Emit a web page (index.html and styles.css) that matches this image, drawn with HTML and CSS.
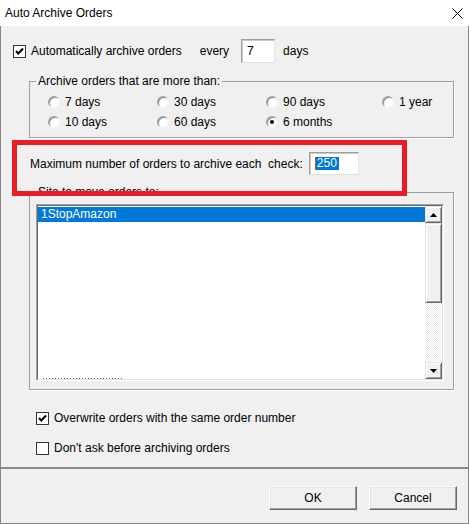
FILE: index.html
```html
<!DOCTYPE html>
<html>
<head>
<meta charset="utf-8">
<link rel="stylesheet" href="styles.css">
</head>
<body>
<div class="window">
  <div class="titlebar">
    <span class="title">Auto Archive Orders</span>
    <svg class="close" width="11" height="11" viewBox="0 0 11 11"><path d="M0.5 0.5 L10.5 10.5 M10.5 0.5 L0.5 10.5" stroke="#000" stroke-width="1" fill="none"/></svg>
  </div>
  <div class="client">
    <div class="row-auto">
      <label class="check">
        <span class="box"><svg width="11" height="11" viewBox="0 0 11 11"><path d="M2 5 L4.3 7.5 L9 2.5" stroke="#000" stroke-width="2" fill="none"/></svg></span>
        <span>Automatically archive orders</span>
      </label>
      <span class="every">every</span>
      <span class="textbox tb-days">7</span>
      <span class="days">days</span>
    </div>

    <fieldset class="group g1">
      <legend>Archive orders that are more than:</legend>
      <div class="radios">
        <label class="radio"><span class="dot"></span>7 days</label>
        <label class="radio"><span class="dot"></span>30 days</label>
        <label class="radio"><span class="dot"></span>90 days</label>
        <label class="radio"><span class="dot"></span>1 year</label>
        <label class="radio"><span class="dot"></span>10 days</label>
        <label class="radio"><span class="dot"></span>60 days</label>
        <label class="radio"><span class="dot on"></span>6 months</label>
      </div>
    </fieldset>

    <div class="row-max">
      <span class="max-label">Maximum number of orders to archive each&nbsp; check:</span>
      <span class="textbox tb-max"><span class="caret"></span><span class="sel">250</span></span>
    </div>

    <fieldset class="group g2">
      <legend>Site to move orders to:</legend>
      <div class="listbox">
        <div class="listbox-inner">
          <div class="items">
            <div class="item selected">1StopAmazon</div>
            <div class="spacer"></div>
            <div class="ghost"></div>
          </div>
          <div class="scrollbar">
            <div class="sb-btn"><svg width="7" height="4" viewBox="0 0 7 4"><path d="M3.5 0 L7 4 L0 4 Z" fill="#000"/></svg></div>
            <div class="sb-thumb"></div>
            <div class="sb-track"></div>
            <div class="sb-btn"><svg width="7" height="4" viewBox="0 0 7 4"><path d="M0 0 L7 0 L3.5 4 Z" fill="#000"/></svg></div>
          </div>
        </div>
      </div>
    </fieldset>

    <label class="check c2">
      <span class="box"><svg width="11" height="11" viewBox="0 0 11 11"><path d="M2 5 L4.3 7.5 L9 2.5" stroke="#000" stroke-width="2" fill="none"/></svg></span>
      <span>Overwrite orders with the same order number</span>
    </label>
    <label class="check c3">
      <span class="box"></span>
      <span>Don't ask before archiving orders</span>
    </label>
  </div>
  <div class="footer">
    <button class="btn">OK</button>
    <button class="btn">Cancel</button>
  </div>
  <div class="highlight"></div>
</div>
</body>
</html>
```
FILE: styles.css
```css
* { box-sizing: border-box; }
html, body { margin: 0; padding: 0; }
body {
  width: 469px;
  height: 524px;
  overflow: hidden;
  background: #fff;
  font-family: "Liberation Sans", Arial, sans-serif;
  font-size: 12px;
  color: #000;
}
.window {
  position: relative;
  width: 469px;
  height: 524px;
  display: flex;
  flex-direction: column;
}
.titlebar {
  height: 26px;
  flex: none;
  display: flex;
  align-items: center;
  justify-content: space-between;
  padding: 0 6px 0 5px;
  background: #fff;
}
.title { line-height: 14px; }
.close { display: block; }

.client {
  height: 441px;
  flex: none;
  background: #f0f0f0;
  border-left: 1px solid #858585;
  border-right: 1px solid #858585;
  display: flex;
  flex-direction: column;
  align-items: flex-start;
}

.row-auto {
  display: flex;
  align-items: center;
  height: 24px;
  margin: 13px 0 0 12px;
}
.check {
  display: flex;
  align-items: center;
  gap: 5px;
  line-height: 16px;
}
.box {
  width: 13px;
  height: 13px;
  flex: none;
  background: #fff;
  border: 1px solid #333;
  display: flex;
  align-items: center;
  justify-content: center;
}
.box svg { display: block; }
.every { margin-left: 18px; }
.days { margin-left: 8px; }

.textbox {
  display: flex;
  align-items: center;
  background: #fff;
  border: 1px solid;
  border-color: #a0a0a0 #e3e3e3 #e3e3e3 #a0a0a0;
  box-shadow: inset 1px 1px 0 #c8c8c8;
}
.tb-days {
  width: 34px;
  height: 24px;
  margin-left: 12px;
  padding-left: 5px;
}

.group {
  margin: 0 0 0 28px;
  width: 425px;
  padding: 0;
  border: 1px solid #a0a0a0;
  box-shadow: 1px 1px 0 #fff;
  min-width: 0;
}
.group legend {
  padding: 0 2px;
  margin: 0;
  line-height: 15px;
}
.g1 {
  margin-top: 11px;
  padding: 3px 0 5px 6px;
}
.radios {
  display: grid;
  grid-template-columns: 109px 109px 116px auto;
  grid-auto-rows: 20px;
  padding-left: 12px;
}
.radio {
  display: flex;
  align-items: center;
  gap: 5px;
}
.dot {
  width: 12px;
  height: 12px;
  flex: none;
  border-radius: 50%;
  background: #fff;
  border: 1px solid;
  border-color: #a0a0a0 #f4f4f4 #f4f4f4 #a0a0a0;
  box-shadow: inset 1px 1px 0 #8a8a8a;
  display: flex;
  align-items: center;
  justify-content: center;
}
.dot.on::after {
  content: "";
  width: 4px;
  height: 4px;
  border-radius: 50%;
  background: #000;
}

.row-max {
  display: flex;
  align-items: center;
  height: 23px;
  margin: 14px 0 0 29px;
}
.tb-max {
  width: 50px;
  height: 23px;
  margin-left: 6px;
  padding-left: 5px;
}
.caret {
  width: 1px;
  height: 13px;
  background: #b05a1a;
}
.sel {
  background: #0078d7;
  color: #fff;
  line-height: 13px;
  padding: 0 2px 0 1px;
}

.g2 {
  margin-top: 10px;
  padding: 4px 0 8px 6px;
}
.listbox {
  width: 408px;
  height: 177px;
  border: 1px solid;
  border-color: #a0a0a0 #fff #fff #a0a0a0;
}
.listbox-inner {
  height: 100%;
  display: flex;
  background: #fff;
  border: 1px solid;
  border-color: #696969 #e3e3e3 #e3e3e3 #696969;
}
.items {
  flex: 1;
  display: flex;
  flex-direction: column;
  overflow: hidden;
}
.item {
  height: 15px;
  line-height: 15px;
  padding-left: 3px;
}
.item.selected {
  margin-top: 1px;
  background: #0078d7;
  color: #fff;
}
.spacer { flex: 1; }
.ghost {
  height: 1px;
  width: 80px;
  margin-left: 5px;
  background: repeating-linear-gradient(90deg, #6a5a7a 0 1px, transparent 1px 3px);
}
.scrollbar {
  width: 17px;
  flex: none;
  display: flex;
  flex-direction: column;
}
.sb-btn, .sb-thumb {
  background: #f0f0f0;
  border: 1px solid;
  border-color: #e3e3e3 #696969 #696969 #e3e3e3;
  box-shadow: inset 1px 1px 0 #fff, inset -1px -1px 0 #a0a0a0;
}
.sb-btn {
  height: 17px;
  display: flex;
  align-items: center;
  justify-content: center;
}
.sb-btn svg { display: block; }
.sb-thumb { height: 80px; }
.sb-track {
  flex: 1;
  background: repeating-conic-gradient(#fff 0 25%, #ececec 0 50%) 0 0 / 2px 2px;
}

.c2 { margin: 20px 0 0 35px; }
.c3 { margin: 14px 0 0 35px; }

.footer {
  flex: 1;
  background: #f0f0f0;
  border-top: 2px solid #8a8a8a;
  border-left: 1px solid #858585;
  border-right: 1px solid #858585;
  border-bottom: 1px solid #858585;
  display: flex;
  justify-content: flex-end;
  align-items: flex-start;
  gap: 12px;
  padding: 17px 11px 0 0;
}
.btn {
  width: 88px;
  height: 24px;
  margin: 0;
  padding: 0;
  font-family: "Liberation Sans", Arial, sans-serif;
  font-size: 12px;
  color: #000;
  background: #f0f0f0;
  border: 1px solid;
  border-color: #fff #696969 #696969 #fff;
  box-shadow: inset -1px -1px 0 #a0a0a0, inset 1px 1px 0 #e3e3e3;
}

.highlight {
  position: absolute;
  left: 12px;
  top: 140px;
  width: 395px;
  height: 56px;
  border: 5px solid #ed1c24;
  pointer-events: none;
}
```
